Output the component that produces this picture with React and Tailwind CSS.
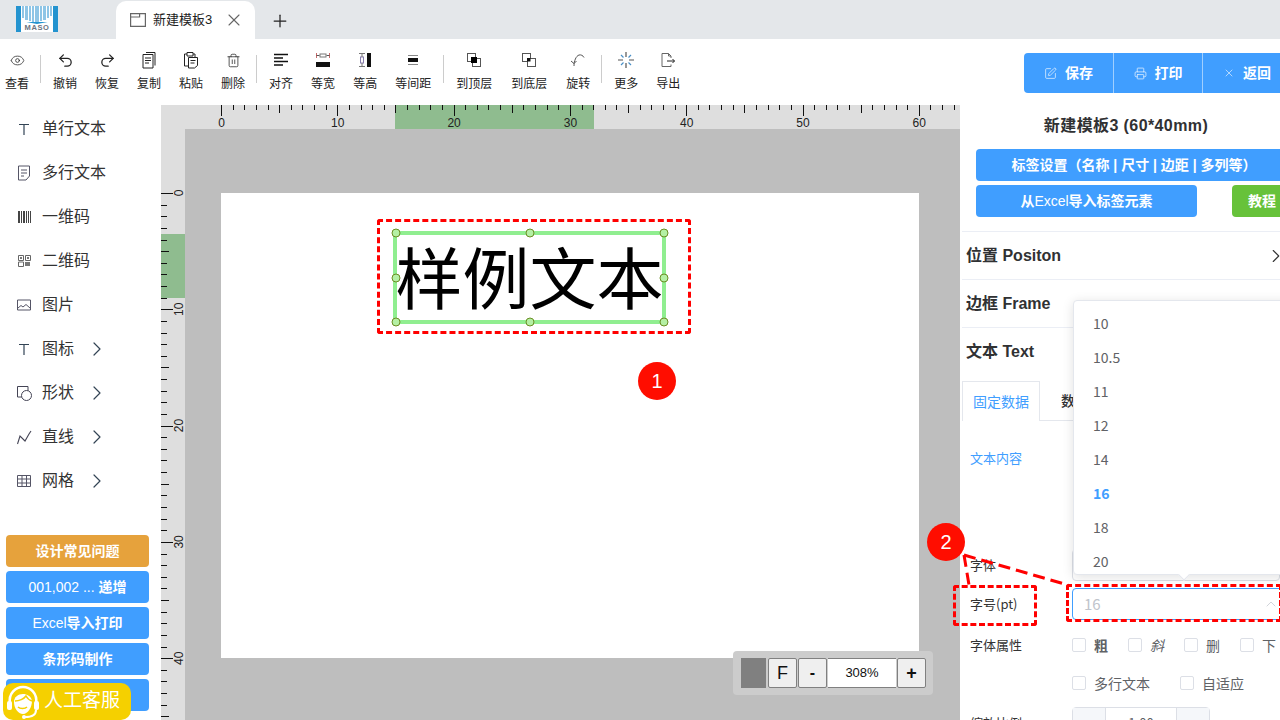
import React from "react";
import { Undo2, Redo2, Trash2, Eye, ChevronRight, ChevronUp, X, Plus, SquarePen, Printer } from "lucide-react";

const S = { fill: "none", stroke: "currentColor", strokeWidth: 1 };

/* -------------------- TOOLBAR ICONS -------------------- */
const CopyIcon = () => (
  <svg width="16" height="18" viewBox="0 0 16 18" {...S}>
    <path d="M5 1.5h9v13" />
    <path d="M2 3.5h10v13.5H2z" />
    <path d="M4 7h6M4 9.5h6M4 12h4" />
  </svg>
);
const PasteIcon = () => (
  <svg width="16" height="18" viewBox="0 0 16 18" {...S}>
    <path d="M4 3H1.5v12H5" />
    <path d="M10 3h2v3" />
    <path d="M4 1.5h6V5H4z" />
    <path d="M5.5 6.5h9v8l-3 2.5h-6z" />
    <path d="M7.5 9.5h5M7.5 12h4" />
  </svg>
);
const AlignIcon = () => (
  <svg width="14" height="14" viewBox="0 0 14 14" stroke="#111" strokeWidth="1.4">
    <path d="M0 1.5h14M0 5h9M0 8.5h14M0 12h9" />
  </svg>
);
const SameWidthIcon = () => (
  <svg width="14" height="16" viewBox="0 0 14 16" fill="none">
    <path d="M.5 1v5M13.5 1v5" stroke="#c96a6a" />
    <path d="M.5 3.5h3M10.500 3.500h3" stroke="#555" />
    <rect x="4" y="2" width="6" height="3" stroke="#777" />
    <rect x="0" y="10" width="14" height="5" fill="#111" />
  </svg>
);
const SameHeightIcon = () => (
  <svg width="14" height="14" viewBox="0 0 14 14" fill="none">
    <path d="M1 .5h6M1 13.500h6" stroke="#777" />
    <rect x="2.500" y="4" width="3" height="6" stroke="#8a7fb0" />
    <path d="M4 1v3M4 10v3" stroke="#777" />
    <rect x="9" y="0" width="4" height="14" fill="#111" />
  </svg>
);
const SameGapIcon = () => (
  <svg width="10" height="10" viewBox="0 0 10 10" fill="none">
    <path d="M0 .5h10M0 9.500h10" stroke="#888" />
    <rect x="0" y="3" width="10" height="4" fill="#111" />
  </svg>
);
const ToTopIcon = () => (
  <svg width="14" height="14" viewBox="0 0 14 14" fill="none">
    <rect x=".5" y=".5" width="8" height="8" stroke="#555" />
    <rect x="5.500" y="5.500" width="8" height="8" stroke="#555" fill="#fff" />
    <rect x="4" y="4" width="6" height="6" fill="#000" />
  </svg>
);
const ToBottomIcon = () => (
  <svg width="14" height="14" viewBox="0 0 14 14" fill="none">
    <rect x=".5" y=".5" width="8" height="8" stroke="#555" fill="#fff" />
    <rect x="5.500" y="5.500" width="8" height="8" stroke="#555" fill="#fff" />
    <rect x="5" y="5" width="3.500" height="3.500" fill="#111" />
  </svg>
);
const RotateIcon = () => (
  <svg width="16" height="14" viewBox="0 0 16 14" fill="none" stroke="#555">
    <path d="M4 13C4 8 6 3 9 2c2-.5 4 .5 5 2.500" />
    <path d="M1 8l3 2.500 2.500-2.500" />
  </svg>
);
const MoreIcon = () => (
  <svg width="16" height="16" viewBox="0 0 16 16" stroke="#555" strokeWidth="1.2">
    <path d="M8 0v5M8 11v5M0 8h5M11 8h5" />
    <path d="M3 3l2.500 2.500M13 3l-2.500 2.500M3 13l2.500-2.500M13 13l-2.500-2.500" stroke="#4a90c8" />
  </svg>
);
const ExportIcon = () => (
  <svg width="14" height="14" viewBox="0 0 14 14" fill="none" stroke="#666">
    <path d="M10 5V3L7.500.5H1v13h9v-2" />
    <path d="M7.500.5V3H10" />
    <path d="M6 8h7.500M11.500 6l2 2-2 2" stroke="#222" />
  </svg>
);

/* -------------------- SIDEBAR ICONS -------------------- */
const TextIcon = () => (
  <svg width="14" height="14" viewBox="0 0 14 14" fill="none" stroke="#345" strokeWidth="1.2">
    <path d="M2 2.500h10M7 2.500V13" />
  </svg>
);
const NoteIcon = () => (
  <svg width="14" height="16" viewBox="0 0 14 16" fill="none" stroke="#556">
    <path d="M1.500 1h11v10l-3.500 4H1.500z" />
    <path d="M4 5h6M4 8h6M4 11h3" />
  </svg>
);
const BarcodeIcon = () => (
  <svg width="13" height="12" viewBox="0 0 13 12">
    <path d="M0 0h2v12H0zM3 0h1v12H3zM5 0h2v12H5zM8 0h1v12H8zM10 0h1v12h-1zM12 0h1v12h-1z" fill="#444" />
  </svg>
);
const QrIcon = () => (
  <svg width="13" height="12" viewBox="0 0 13 12" fill="none" stroke="#666">
    <path d="M.5.500h5v5h-5zM7.500.500h5v5h-5zM.5 7h5v4.500h-5z" />
    <path d="M2 2h2v2H2zM9 2h2v2H9zM7 7h5v4H7z" fill="#777" stroke="none" />
  </svg>
);
const PictureIcon = () => (
  <svg width="14" height="12" viewBox="0 0 14 12" fill="none" stroke="#556">
    <path d="M.5 1h13v10H.5z" />
    <path d="M1 9l3-2.500 2 1.500 3-2.500 4 3.500" />
  </svg>
);
const ShapeIcon = () => (
  <svg width="15" height="15" viewBox="0 0 15 15" fill="none" stroke="#445">
    <path d="M5 11H.5V.5H11V5" />
    <circle cx="9.500" cy="9.500" r="5" fill="#fff" />
  </svg>
);
const LineIcon = () => (
  <svg width="15" height="15" viewBox="0 0 15 15" fill="none" stroke="#445" strokeWidth="1.1">
    <path d="M.5 14L3 6l5 5 4-7 2-3" />
  </svg>
);
const GridIcon = () => (
  <svg width="14" height="12" viewBox="0 0 14 12" fill="none" stroke="#556">
    <path d="M.5.500h13v11H.5zM.5 4h13M.5 8h13M5 .500v11M9.500 .500v11" />
  </svg>
);

const toolbarItems = [
  { label: "查看", icon: <Eye size={15} strokeWidth={1.2} />, className: "pl-[5px] pr-[9px]" },
  "sep",
  { label: "撤销", icon: <Undo2 size={17} strokeWidth={1.8} /> },
  { label: "恢复", icon: <Redo2 size={17} strokeWidth={1.8} /> },
  { label: "复制", icon: <CopyIcon /> },
  { label: "粘贴", icon: <PasteIcon /> },
  { label: "删除", icon: <Trash2 size={15} strokeWidth={1.2} /> },
  "sep",
  { label: "对齐", icon: <AlignIcon /> },
  { label: "等宽", icon: <SameWidthIcon /> },
  { label: "等高", icon: <SameHeightIcon /> },
  { label: "等间距", icon: <SameGapIcon />, className: "pl-[9px] pr-[10px]" },
  "sep",
  { label: "到顶层", icon: <ToTopIcon />, className: "pl-[9px] pr-[9px]" },
  { label: "到底层", icon: <ToBottomIcon />, className: "pl-[10px] pr-[10px]" },
  { label: "旋转", icon: <RotateIcon /> },
  "sep",
  { label: "更多", icon: <MoreIcon /> },
  { label: "导出", icon: <ExportIcon /> },
];

const sideItems = [
  { label: "单行文本", icon: <TextIcon /> },
  { label: "多行文本", icon: <NoteIcon /> },
  { label: "一维码", icon: <BarcodeIcon /> },
  { label: "二维码", icon: <QrIcon /> },
  { label: "图片", icon: <PictureIcon /> },
  { label: "图标", icon: <TextIcon />, more: true },
  { label: "形状", icon: <ShapeIcon />, more: true },
  { label: "直线", icon: <LineIcon />, more: true },
  { label: "网格", icon: <GridIcon />, more: true },
];

const sizeOptions = ["10", "10.5", "11", "12", "14", "16", "18", "20"];
const handles = [
  "left-0 top-0",
  "left-1/2 top-0",
  "left-full top-0",
  "left-0 top-1/2",
  "left-full top-1/2",
  "left-0 top-full",
  "left-1/2 top-full",
  "left-full top-full",
];

const RULER_STEP = 11.63;

const TabBar = () => (
  <div className="flex h-[39px] shrink-0 items-end bg-[#e4e7ea]">
    <svg width="42" height="26" viewBox="0 0 42 26" className="mb-[7px] ml-[16px] mr-[58px]">
      <rect width="42" height="26" fill="#2393cf" />
      <rect x="5" y="0" width="32" height="16" fill="#fff" />
      <path d="M6 0h2v12H6zM9 0h3v14H9zM13 0h2v15h-2zM16 0h2v16h-2zM19 0h4v16h-4zM24 0h2v15h-2zM27 0h3v14h-3zM31 0h2v12h-2zM34 0h2v10h-2z" fill="#8ec5e6" />
      <path d="M5 15l16 3 16-3v11H5z" fill="#fff" />
      <text x="21" y="24" textAnchor="middle" fontSize="7.500" fontWeight="700" fill="#6b7480" letterSpacing=".6" fontFamily="Liberation Sans">
        MASO
      </text>
    </svg>
    <div className="flex h-[38px] w-[139px] items-center rounded-t-[10px] bg-white pl-[14px] text-[13px] text-[#222]">
      <svg width="16" height="14" viewBox="0 0 16 14" fill="none" stroke="#666" strokeWidth="1.2">
        <path d="M.6.6h14.800v12.800H.6zM.6 4h9V.6" />
      </svg>
      <span className="ml-[7px] w-[60px]">新建模板3</span>
      <X size={20} strokeWidth={1.3} className="ml-[11px] text-[#666]" />
    </div>
    <Plus size={20} strokeWidth={1.5} className="mb-[8px] ml-[15px] text-[#222]" />
  </div>
);

const Toolbar = () => (
  <div className="flex h-[66px] shrink-0 bg-white">
    <div className="flex min-w-0 flex-1 items-start pt-[11px]">
      {toolbarItems.map((item, i) =>
        item === "sep" ? (
          <div key={i} className="ml-[2px] mr-[3px] mt-[5px] h-[28px] w-px bg-[#cccccc]" />
        ) : (
          <div key={i} className={`flex flex-col items-center ${item.className || "px-[9px]"}`}>
            <div className="flex h-[20px] items-center text-[#222]">{item.icon}</div>
            <span className="mt-[5px] text-[12px] leading-[18px] whitespace-nowrap text-[#222]">{item.label}</span>
          </div>
        )
      )}
    </div>
    <div className="mt-[14px] flex h-[40px] w-[256px] shrink-0 overflow-hidden rounded-l-[4px] bg-[#409eff] text-[14px] font-bold text-white">
      <div className="flex w-[90px] shrink-0 items-center justify-center gap-[8px] border-r border-[#a0cfff]">
        <SquarePen size={13} strokeWidth={1.2} /> 保存
      </div>
      <div className="flex w-[89px] shrink-0 items-center justify-center gap-[8px] border-r border-[#a0cfff]">
        <Printer size={13} strokeWidth={1.2} /> 打印
      </div>
      <div className="flex w-[88px] shrink-0 items-center justify-center gap-[8px]">
        <X size={12} strokeWidth={1.2} /> 返回
      </div>
    </div>
  </div>
);

const Sidebar = () => (
  <div className="flex w-[161px] shrink-0 flex-col bg-white">
    <div className="pt-[2px]">
      {sideItems.map((item) => (
        <div key={item.label} className="flex h-[44px] items-center text-[16px] text-[#333]">
          <div className="flex w-[42px] justify-center pl-[12px] pr-[6px]">{item.icon}</div>
          <span>{item.label}</span>
          {item.more && <ChevronRight size={24} strokeWidth={1.2} className="ml-[11px] text-[#345]" />}
        </div>
      ))}
    </div>
    <div className="mt-auto flex flex-col gap-[4px] pb-[9px] pl-[6px] pr-[12px] text-[14px] font-bold text-white">
      <div className="flex h-[32px] items-center justify-center rounded-[4px] bg-[#e6a23c]">设计常见问题</div>
      <div className="flex h-[32px] items-center justify-center rounded-[4px] bg-[#409eff]">
        <span className="font-normal">001,002 ...&nbsp;</span>递增
      </div>
      <div className="flex h-[32px] items-center justify-center rounded-[4px] bg-[#409eff]">
        <span className="font-normal">Excel</span>导入打印
      </div>
      <div className="flex h-[32px] items-center justify-center rounded-[4px] bg-[#409eff]">条形码制作</div>
      <div className="h-[32px] rounded-[4px] bg-[#409eff]" />
    </div>
  </div>
);

const TopRuler = () => {
  const ticks = Array.from({ length: 64 }, (_, i) => i);
  return (
    <svg width="799" height="24" className="block shrink-0 bg-[#dedede]">
      <rect x="234" y="0" width="199" height="24" fill="#8fbc8f" />
      {ticks.map((i) => {
        const x = Math.round(60 + i * RULER_STEP) + 0.5;
        const len = i % 10 === 0 ? 11 : i % 5 === 0 ? 8 : 5;
        return <line key={i} x1={x} x2={x} y1="0" y2={len} stroke="#111" />;
      })}
      {[0, 10, 20, 30, 40, 50, 60].map((n) => (
        <text key={n} x={60.5 + n * RULER_STEP} y="22" textAnchor="middle" fontSize="12" fill="#222" fontFamily="Liberation Sans">
          {n}
        </text>
      ))}
    </svg>
  );
};

const LeftRuler = () => {
  const ticks = Array.from({ length: 46 }, (_, i) => i);
  return (
    <svg width="24" height="591" className="block shrink-0 bg-[#dedede]">
      <rect x="0" y="105" width="24" height="64" fill="#8fbc8f" />
      {ticks.map((i) => {
        const y = Math.round(64 + i * RULER_STEP) + 0.5;
        const len = i % 10 === 0 ? 12 : i % 5 === 0 ? 8 : 6;
        return <line key={i} y1={y} y2={y} x1="0" x2={len} stroke="#111" />;
      })}
      {[0, 10, 20, 30, 40].map((n) => {
        const y = 64 + n * RULER_STEP;
        return (
          <text key={n} x="22" y={y} transform={`rotate(-90 22 ${y})`} textAnchor="middle" fontSize="12" fill="#222" fontFamily="Liberation Sans">
            {n}
          </text>
        );
      })}
    </svg>
  );
};

const ZoomBox = () => (
  <div className="absolute left-[548px] top-[522px] flex h-[44px] w-[200px] items-center gap-[1px] rounded-[4px] bg-[#cccccc] pl-[8px] text-[#111]">
    <div className="mr-[1px] h-[30px] w-[25px] bg-[#808080]" />
    <div className="flex h-[30px] w-[29px] items-center justify-center rounded-[2px] border border-[#808080] bg-[#efefef] text-[18px]">F</div>
    <div className="flex h-[30px] w-[29px] items-center justify-center rounded-[2px] border border-[#808080] bg-[#efefef] text-[16px] font-bold">-</div>
    <div className="flex h-[30px] w-[68px] items-center justify-center border-y border-[#808080] bg-white text-[13px]">308%</div>
    <div className="flex h-[30px] w-[29px] items-center justify-center rounded-[2px] border border-[#808080] bg-[#efefef] text-[18px] font-bold">+</div>
  </div>
);

const Workspace = () => (
  <div className="flex min-w-0 flex-1 flex-col">
    <TopRuler />
    <div className="flex flex-1">
      <LeftRuler />
      <div className="relative flex-1 bg-[#bebebe] pl-[36px] pt-[64px]">
        <div className="relative h-[465px] w-[698px] bg-white">
          <div className="absolute left-[172px] top-[38px] flex h-[93px] w-[273px] items-center justify-center border-[4px] border-[#90ee90] pt-[6px] text-[67px] leading-none text-black">
            <span className="whitespace-nowrap">样例文本</span>
            <div className="absolute -bottom-[2px] -left-px -right-[2px] -top-[2px]">
              {handles.map((h) => (
                <span
                  key={h}
                  className={`absolute h-[9px] w-[9px] -translate-x-1/2 -translate-y-1/2 rounded-full border border-[#6b8e23] bg-[#b4f0a4] ${h}`}
                />
              ))}
            </div>
          </div>
        </div>
        <ZoomBox />
      </div>
    </div>
  </div>
);

const SectionRow = ({ title, chevron }) => (
  <div className="flex h-[48px] items-center justify-between border-t border-[#ebeef5] pl-[4px] text-[16px] font-bold text-[#303133]">
    <span>{title}</span>
    {chevron && <ChevronRight size={22} strokeWidth={1.2} className="mr-[45px] text-[#333]" />}
  </div>
);

const Check = ({ label, labelClass = "" }) => (
  <div className="flex items-center">
    <span className="h-[14px] w-[14px] shrink-0 rounded-[2px] border border-[#dcdfe6] bg-white" />
    <span className={`ml-[8px] whitespace-nowrap text-[14px] text-[#606266] ${labelClass}`}>{label}</span>
  </div>
);

const RightPanel = () => (
  <div className="w-[320px] shrink-0 overflow-hidden bg-white">
    <div className="w-[372px] pl-[2px]">
      <div className="w-[328px] pt-[11px] text-center text-[16px] font-bold leading-[20px] tracking-[0.4px] text-[#303133]">新建模板3 (60*40mm)</div>
      <div className="ml-[14px] mt-[13px] flex h-[32px] w-[316px] items-center justify-center rounded-[4px] bg-[#409eff] text-[14px] font-bold text-white">
        标签设置（名称 | 尺寸 | 边距 | 多列等）
      </div>
      <div className="ml-[14px] mt-[4px] flex">
        <div className="flex h-[32px] w-[221px] items-center justify-center rounded-[4px] bg-[#409eff] text-[14px] font-bold text-white">
          从<span className="font-normal">Excel</span>导入标签元素
        </div>
        <div className="ml-[35px] flex h-[32px] w-[60px] items-center justify-center rounded-[4px] bg-[#67c23a] text-[14px] font-bold text-white">教程</div>
      </div>
      <div className="mt-[14px]">
        <SectionRow title="位置 Positon" chevron />
        <SectionRow title="边框 Frame" />
        <SectionRow title="文本 Text" />
      </div>
      <div className="mt-[6px] flex h-[40px] w-[340px] border-b border-[#e4e7ed] [font-family:'Noto_Sans_CJK_SC',sans-serif] text-[14px]">
        <div className="flex h-[40px] w-[78px] items-center justify-center border-x border-t border-[#e4e7ed] bg-white text-[#409eff]">固定数据</div>
        <div className="flex items-center pl-[21px] font-medium text-[#303133]">数据</div>
      </div>
      <div className="[font-family:'Noto_Sans_CJK_SC',sans-serif] text-[13px] text-[#333]">
        <div className="h-[128px] pl-[8px] pt-[26px] leading-[22px] text-[#409eff]">文本内容</div>
        <div className="flex h-[32px] items-center">
          <span className="w-[110px] pl-[8px]">字体</span>
          <div className="h-[32px] w-[208px] rounded-[4px] border border-[#dcdfe6]" />
        </div>
        <div className="mt-[7px] flex h-[32px] items-center">
          <span className="w-[110px] pl-[8px]">字号(pt)</span>
          <div className="flex h-[32px] w-[224px] items-center justify-between rounded-[4px] border border-[#409eff] pl-[11px] pr-[16px] text-[15px] text-[#c0c4cc]">
            16
            <ChevronUp size={16} strokeWidth={1.1} />
          </div>
        </div>
        <div className="mt-[9px] flex h-[32px] items-center">
          <span className="w-[110px] pl-[8px]">字体属性</span>
          <div className="flex gap-[20px]">
            <Check label="粗" labelClass="font-bold" />
            <Check label="斜" labelClass="italic" />
            <Check label="删" />
            <Check label="下" />
          </div>
        </div>
        <div className="mt-[6px] flex h-[32px] items-center">
          <span className="w-[110px]" />
          <div className="flex gap-[30px]">
            <Check label="多行文本" />
            <Check label="自适应" />
          </div>
        </div>
        <div className="mt-[8px] flex h-[32px] items-center">
          <span className="w-[110px] pl-[8px]">缩放比例</span>
          <div className="flex h-[32px] w-[138px] items-center rounded-[4px] border border-[#dcdfe6] text-[#606266]">
            <span className="flex h-full w-[33px] items-center justify-center border-r border-[#dcdfe6] bg-[#f5f7fa]">-</span>
            <span className="flex-1 text-center text-[13px]">1.00</span>
            <span className="flex h-full w-[33px] items-center justify-center border-l border-[#dcdfe6] bg-[#f5f7fa]">+</span>
          </div>
        </div>
      </div>
    </div>
  </div>
);

const SizeDropdown = () => (
  <div className="absolute left-[1073px] top-[300px] h-[275px] w-[240px] rounded-[4px] border border-[#e4e7ed] bg-white pt-[5px] [font-family:'Noto_Sans_CJK_SC',sans-serif] text-[14px] text-[#606266] shadow-[0_2px_12px_rgba(0,0,0,0.12)]">
    {sizeOptions.map((s) => (
      <div key={s} className={`flex h-[34px] items-center pl-[19px] ${s === "16" ? "font-bold text-[#409eff]" : ""}`}>
        {s}
      </div>
    ))}
    <span className="absolute left-[106px] top-[270px] h-[8px] w-[8px] rotate-45 border-b border-r border-[#e4e7ed] bg-white" />
  </div>
);

const Annotations = () => (
  <>
    <div className="absolute left-[377px] top-[219px] h-[115px] w-[314px] rounded-[3px] border-[3px] border-dashed border-[#ff0000]" />
    <div className="absolute left-[953px] top-[585px] h-[41px] w-[84px] rounded-[3px] border-[3px] border-dashed border-[#ff0000]" />
    <div className="absolute left-[1066px] top-[584px] h-[38px] w-[216px] rounded-[3px] border-[3px] border-dashed border-[#ff0000]" />
    <svg width="1280" height="720" className="pointer-events-none absolute left-0 top-0">
      <path d="M964 555L1068 585" stroke="#ff0000" strokeWidth="3" strokeDasharray="12 6" fill="none" />
      <path d="M964 555L969 585" stroke="#ff0000" strokeWidth="3" strokeDasharray="12 6" fill="none" />
    </svg>
    <div className="absolute left-[638px] top-[362px] flex h-[38px] w-[38px] items-center justify-center rounded-full bg-[#ff0d00] text-[20px] text-white">1</div>
    <div className="absolute left-[927px] top-[523px] flex h-[38px] w-[38px] items-center justify-center rounded-full bg-[#ff0d00] text-[20px] text-white">2</div>
  </>
);

const ServiceBadge = () => (
  <div className="absolute bottom-0 left-[3px] flex h-[37px] w-[128px] items-center rounded-[10px] bg-[#f5d000] pl-[2px] text-[19px] text-white">
    <svg width="36" height="36" viewBox="0 0 36 36" fill="none" stroke="#fff">
      <path d="M5 20C3 9 11 3 18 3s15 6 13 17" strokeWidth="2.500" />
      <path d="M9 18c0-5 4-8 9-8 4 0 8 2 9 7 0 6-4 13-9 13s-9-6-9-12z" fill="#fff" stroke="none" />
      <path d="M10 17c4 0 9-2 11-5 1 2 3 4 6 5" stroke="#f5d000" strokeWidth="1.500" />
      <path d="M13 23c2 2 7 2 9 0" stroke="#f5d000" strokeWidth="1.500" />
      <rect x="2" y="17" width="5" height="9" rx="2" fill="#fff" stroke="none" />
      <rect x="29" y="17" width="5" height="9" rx="2" fill="#fff" stroke="none" />
      <path d="M31 26c0 5-5 7-11 7" strokeWidth="2" />
      <circle cx="19" cy="33" r="2" fill="#fff" stroke="none" />
    </svg>
    <span className="ml-[3px] whitespace-nowrap">人工客服</span>
  </div>
);

export default function App() {
  return (
    <div className="relative flex h-[720px] w-[1280px] flex-col overflow-hidden bg-white [font-family:'Liberation_Sans','Noto_Sans_CJK_SC',sans-serif]">
      <TabBar />
      <Toolbar />
      <div className="flex min-h-0 flex-1">
        <Sidebar />
        <Workspace />
        <RightPanel />
      </div>
      <SizeDropdown />
      <Annotations />
      <ServiceBadge />
    </div>
  );
}
